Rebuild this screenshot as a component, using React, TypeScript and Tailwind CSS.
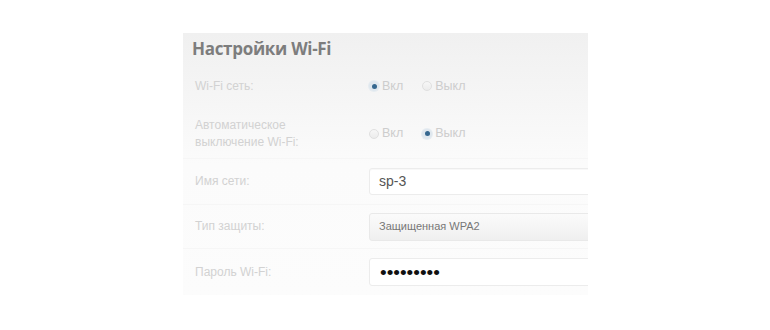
function Radio({ checked }: { checked?: boolean }) {
  return checked ? (
    <span className="flex h-[10px] w-[10px] items-center justify-center rounded-full bg-[#dfe7ee] shadow-[0_0_0_1px_#e6ecf1]">
      <span className="h-[5px] w-[5px] rounded-full bg-[#35678f]" />
    </span>
  ) : (
    <span className="h-[10px] w-[10px] rounded-full border border-[#e0e0e0] bg-gradient-to-b from-[#f7f7f7] to-[#ececec]" />
  );
}

function RadioPair({ on }: { on: boolean }) {
  return (
    <div className="flex items-center text-[12.5px] text-[#cdcdcd]">
      <span className="flex items-center gap-[3px]">
        <Radio checked={on} />
        <span>Вкл</span>
      </span>
      <span className="ml-[19px] flex items-center gap-[3px]">
        <Radio checked={!on} />
        <span>Выкл</span>
      </span>
    </div>
  );
}

function Row({ label, height, children }: { label: React.ReactNode; height: string; children: React.ReactNode }) {
  return (
    <div className={`flex items-center border-b border-[#f6f6f6] ${height}`}>
      <div className="w-[186px] shrink-0 pl-[12px] text-[12px] leading-[17px] text-[#d2d2d2]">{label}</div>
      <div className="flex-1">{children}</div>
    </div>
  );
}

export default function App() {
  return (
    <div className="h-[330px] w-[770px] bg-white font-['Liberation_Sans',Arial,sans-serif]">
      <div className="h-[33px]" />
      <div className="ml-[183px] h-[262px] w-[405px] overflow-hidden bg-gradient-to-b from-[#f0f0f0] via-[#fbfbfb] to-[#fcfcfc]">
        <div className="h-[30px] pl-[9px] pt-[5px] font-['Open_Sans',sans-serif] text-[17px] font-bold leading-[22px] tracking-[-0.3px] text-[#7d7d7d]">
          Настройки Wi-Fi
        </div>
        <Row label="Wi-Fi сеть:" height="h-[46px] border-b-0">
          <RadioPair on={true} />
        </Row>
        <Row
          label={
            <>
              Автоматическое
              <br />
              выключение Wi-Fi:
            </>
          }
          height="h-[50px]"
        >
          <RadioPair on={false} />
        </Row>
        <Row label="Имя сети:" height="h-[46px]">
          <div className="flex h-[27px] w-[240px] items-center rounded-l-[3px] border border-[#ececec] bg-white pl-[9px] text-[14px] text-[#555] shadow-[inset_0_1px_1px_rgba(0,0,0,0.03)]">
            sp-3
          </div>
        </Row>
        <Row label="Тип защиты:" height="h-[44px]">
          <div className="flex h-[28px] w-[240px] items-center rounded-l-[3px] border border-[#e9e9e9] bg-gradient-to-b from-[#fbfbfb] to-[#efefef] pl-[9px] text-[11px] text-[#777]">
            Защищенная WPA2
          </div>
        </Row>
        <Row label="Пароль Wi-Fi:" height="h-[46px] border-b-0">
          <div className="flex h-[28px] w-[240px] items-center rounded-l-[3px] border border-[#ececec] bg-white pl-[10px] text-[19px] leading-none tracking-[0px] text-[#111]">
            •••••••••
          </div>
        </Row>
      </div>
    </div>
  );
}
